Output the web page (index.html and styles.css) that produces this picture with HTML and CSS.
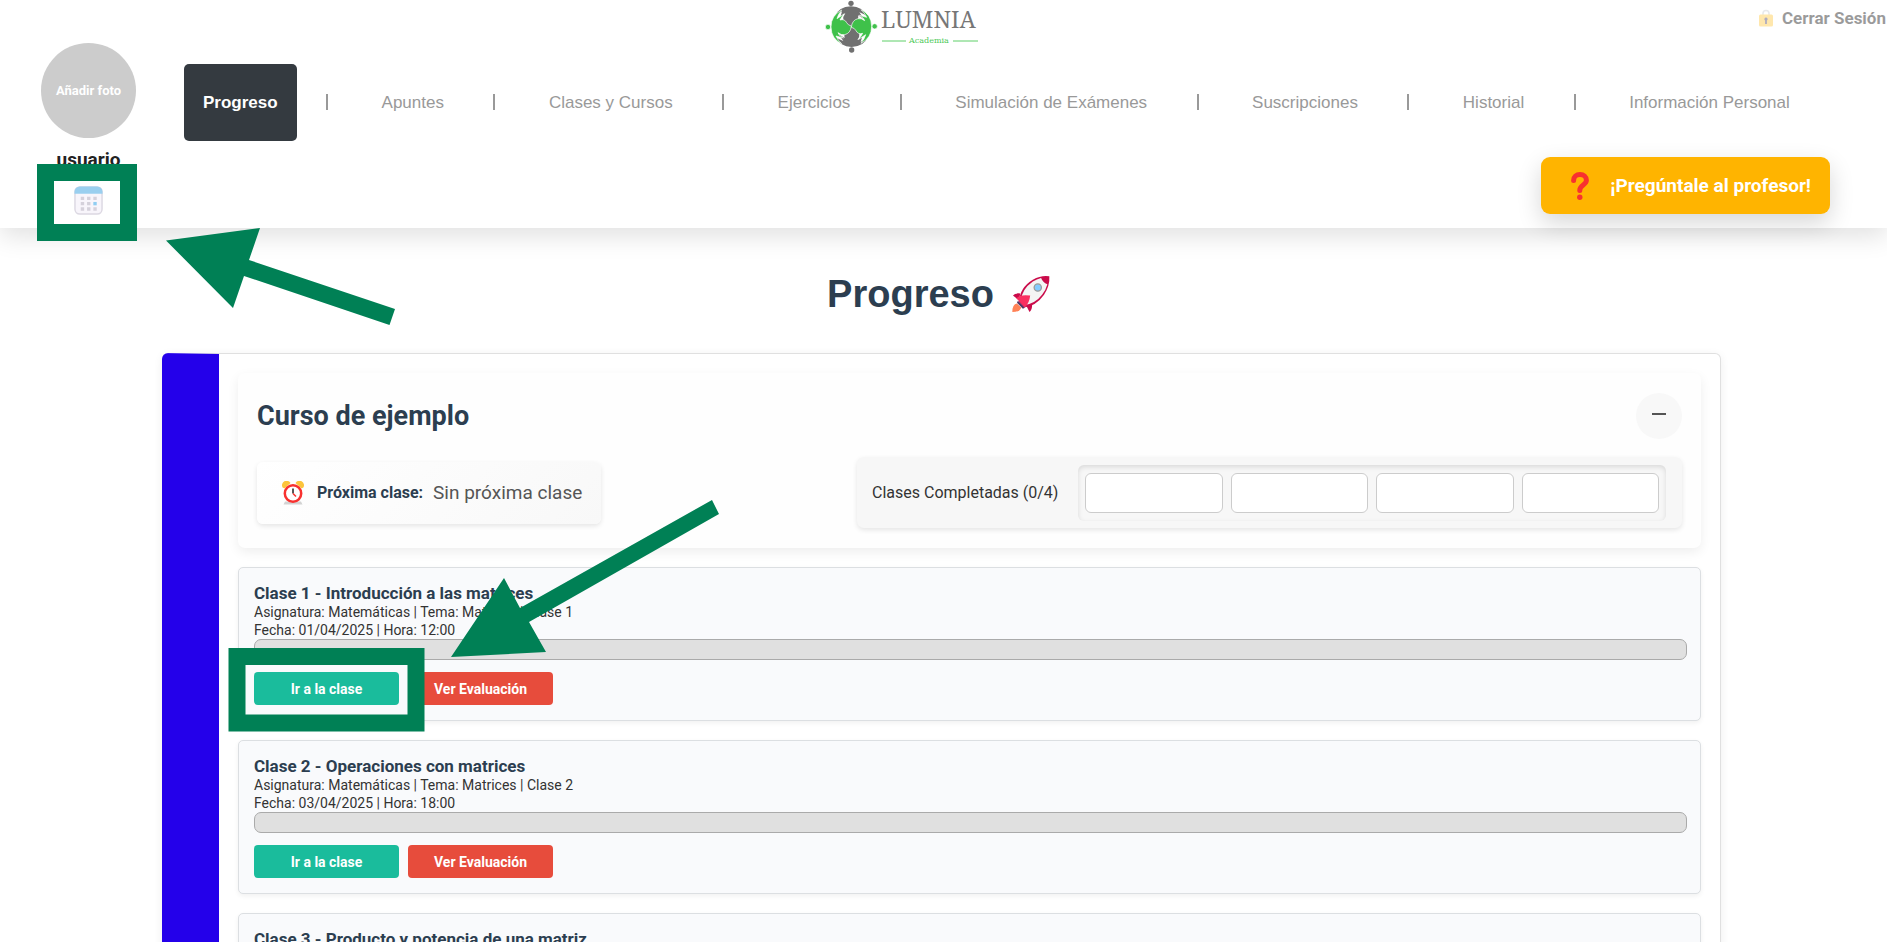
FILE: index.html
```html
<!DOCTYPE html>
<html lang="es">
<head>
<meta charset="utf-8">
<title>Lumnia Academia - Progreso</title>
<link rel="stylesheet" href="styles.css">
</head>
<body>
<header class="header">
  <div class="topbar">
    <a class="brand" href="#" aria-label="Lumnia Academia">
      <svg class="brand-logo" viewBox="0 0 237 54" width="237" height="54">
        <defs>
          <g id="figure">
            <circle cx="87" cy="10" r="8"/>
            <path d="M37 51Q50 20 87 19Q122 19 138 51Q124 40 112 37L126 58Q116 50 108 46Q112 60 100 66Q92 70 90 80Q68 78 64 60Q62 50 70 40Q62 42 54 56L60 34Q46 40 37 51Z"/>
          </g>
        </defs>
        <g transform="translate(-3 0) scale(.3333)">
          <use href="#figure" fill="#707070"/>
          <use href="#figure" fill="#707070" transform="rotate(180 88 80)"/>
          <g stroke="#fff" stroke-width="2">
            <use href="#figure" fill="#3fc14a" transform="rotate(90 88 80)"/>
            <use href="#figure" fill="#3fc14a" transform="rotate(270 88 80)"/>
          </g>
        </g>
        <text class="brand-name" x="56" y="28">LUMNIA</text>
        <path d="M57 41h24M128 41h25" stroke="#5fcf68" stroke-width="1"/>
        <text class="brand-sub" x="84" y="43">Academia</text>
      </svg>
    </a>
    <a class="logout" href="#">
      <svg viewBox="0 0 16 20" width="16" height="20" aria-hidden="true">
        <path d="M5 9V5.500a3 3 0 0 1 6 0V9" fill="none" stroke="#c9cdd2" stroke-width="1.600"/>
        <rect x="1" y="6.500" width="14" height="12" rx="1.500" fill="#ffc83d"/>
        <path d="M8 9.500a1.700 1.700 0 0 0-.9 3.100V16h1.800v-3.400A1.700 1.700 0 0 0 8 9.500z" fill="#433b6b"/>
      </svg>
      <span>Cerrar Sesión</span>
    </a>
  </div>

  <div class="profile">
    <button class="avatar" type="button">Añadir foto</button>
    <span class="username">usuario</span>
    <a class="calendar" href="#" aria-label="Calendario">
      <svg viewBox="0 0 30 30" width="29" height="29">
        <rect x="1" y="1" width="28" height="28" rx="5" fill="#f8f5fb" stroke="#dcd8e2" stroke-width="1.500"/>
        <path d="M.5 8V6A5.500 5.500 0 0 1 6 .5h18A5.500 5.500 0 0 1 29.500 6v2z" fill="#9acfef"/>
        <g fill="#d5d1db">
          <path d="M7 11h3.500v3.500H7zM13.500 11H17v3.500h-3.500zM20 11h3.500v3.500H20zM7 16.500h3.500V20H7zM13.500 16.500H17V20h-3.500zM7 22h3.500v3.500H7zM13.500 22H17v3.500h-3.500zM20 22h3.500v3.500H20z"/>
        </g>
        <path d="M20 16.500h3.500V20H20z" fill="#8fcdf2"/>
      </svg>
    </a>
  </div>

  <nav class="nav">
    <a class="nav-link active" href="#">Progreso</a><span class="sep"></span>
    <a class="nav-link" href="#">Apuntes</a><span class="sep"></span>
    <a class="nav-link" href="#">Clases y Cursos</a><span class="sep"></span>
    <a class="nav-link" href="#">Ejercicios</a><span class="sep"></span>
    <a class="nav-link" href="#">Simulación de Exámenes</a><span class="sep"></span>
    <a class="nav-link" href="#">Suscripciones</a><span class="sep"></span>
    <a class="nav-link" href="#">Historial</a><span class="sep"></span>
    <a class="nav-link" href="#">Información Personal</a>
  </nav>

  <button class="ask" type="button">
    <svg viewBox="0 0 18 28" width="18" height="28" aria-hidden="true">
      <path d="M2.600 8.500C2.600 4.800 5.300 2.600 9 2.600s6.400 2.300 6.400 5.700c0 4.700-6.600 4.600-6.600 9.700v.5" fill="none" stroke="#f8312f" stroke-width="5" stroke-linecap="round"/>
      <circle cx="8.800" cy="25.300" r="2.700" fill="#f8312f"/>
    </svg>
    <span>¡Pregúntale al profesor!</span>
  </button>
</header>

<main class="main">
  <h1 class="title">Progreso
    <svg viewBox="21 21 115 113" width="38" height="38" aria-hidden="true">
      <path d="M36 106Q22 108 22 132Q45 132 49 118z" fill="#ff8257"/>
      <path d="M46 76Q30 74 24 82L42 96zM82 110Q82 126 74 132L64 112z" fill="#ca0b4a"/>
      <path d="M42 102Q44 58 84 34Q110 20 134 24Q136 52 118 80Q94 114 58 118z" fill="#ca0b4a"/>
      <path d="M48 98Q50 64 84 40Q96 32 109 29Q114 42 128 48Q124 64 112 80Q92 106 60 111z" fill="#f4f4f4"/>
      <path d="M39 98L60 119L54 122L36 104z" fill="#533566"/>
      <path d="M34 90Q46 78 76 82Q74 104 60 118z" fill="#f92f60"/>
      <circle cx="99" cy="58" r="11" fill="#83cbff" stroke="#9b9b9b" stroke-width="4"/>
    </svg>
  </h1>

  <section class="course">
    <div class="summary">
      <div class="summary-head">
        <h2 class="course-name">Curso de ejemplo</h2>
        <button class="toggle" type="button" aria-label="Contraer"><span class="minus"></span></button>
      </div>
      <div class="summary-body">
        <div class="next">
          <svg viewBox="0 0 22 24" width="22" height="24" aria-hidden="true">
            <path d="M3 20.500h16l1.500 3h-19z" fill="#d3d3d3"/>
            <path d="M.6 6.500A4.500 4.500 0 0 1 8.500 2L2.500 7.500zM21.400 6.500A4.500 4.500 0 0 0 13.500 2l6 5.500z" fill="#fcc43c"/>
            <circle cx="11" cy="12.500" r="8.200" fill="#fff" stroke="#f8312f" stroke-width="2.500"/>
            <path d="M11 7.500v5" stroke="#212121" stroke-width="1.500"/>
            <path d="M11 12.500l3 3" stroke="#f8312f" stroke-width="1.500"/>
          </svg>
          <strong class="next-label">Próxima clase:</strong>
          <span class="next-value">Sin próxima clase</span>
        </div>
        <div class="completed">
          <span class="completed-label">Clases Completadas (0/4)</span>
          <div class="segments">
            <span class="segment"></span><span class="segment"></span><span class="segment"></span><span class="segment"></span>
          </div>
        </div>
      </div>
    </div>

    <article class="lesson">
      <h3 class="lesson-title">Clase 1 - Introducción a las matrices</h3>
      <p class="lesson-info">Asignatura: Matemáticas | Tema: Matrices | Clase 1</p>
      <p class="lesson-info">Fecha: 01/04/2025 | Hora: 12:00</p>
      <div class="bar"></div>
      <div class="actions">
        <button class="btn go" type="button">Ir a la clase</button>
        <button class="btn review" type="button">Ver Evaluación</button>
      </div>
    </article>

    <article class="lesson">
      <h3 class="lesson-title">Clase 2 - Operaciones con matrices</h3>
      <p class="lesson-info">Asignatura: Matemáticas | Tema: Matrices | Clase 2</p>
      <p class="lesson-info">Fecha: 03/04/2025 | Hora: 18:00</p>
      <div class="bar"></div>
      <div class="actions">
        <button class="btn go" type="button">Ir a la clase</button>
        <button class="btn review" type="button">Ver Evaluación</button>
      </div>
    </article>

    <article class="lesson">
      <h3 class="lesson-title">Clase 3 - Producto y potencia de una matriz</h3>
    </article>
  </section>
</main>

<svg class="marks" width="740" height="740" viewBox="0 0 740 740" aria-hidden="true">
  <g fill="none" stroke="#008055" stroke-width="17">
    <rect x="45.500" y="172.500" width="83" height="60"/>
    <rect x="237" y="656.500" width="179" height="66.500"/>
  </g>
  <g fill="#008055">
    <path d="M166 240.500L260 228L249 260L395 309L389.500 325L244 276L233 308z"/>
    <path d="M451 657L504 578L520 608L712 500L719 514L529 622L546 652z"/>
  </g>
</svg>
</body>
</html>
```
FILE: styles.css
```css
* { box-sizing: border-box; }

html { overflow: hidden; }

body {
  margin: 0;
  height: 100vh;
  overflow: hidden;
  position: relative;
  background: #fff;
  color: #333;
  font-family: Roboto, "Liberation Sans", sans-serif;
  font-size: 16px;
}

a { color: inherit; text-decoration: none; }
button { border: 0; font-family: inherit; cursor: pointer; }
h1, h2, h3, p { margin: 0; }
svg { flex: none; display: block; }

.header {
  display: grid;
  grid-template-columns: 177px 1fr;
  grid-template-rows: 54px auto auto;
  align-content: start;
  height: 228px;
  background: #fff;
  box-shadow: 0 8px 24px rgba(0, 0, 0, .12);
}

.topbar {
  grid-area: 1 / 1 / 2 / 3;
  display: grid;
  grid-template-columns: 1fr auto 1fr;
  align-items: start;
}

.brand { grid-column: 2; }
.brand-name { font: 23px "Noto Serif", "DejaVu Serif", serif; fill: #777; }
.brand-sub { font: 8px "DejaVu Serif", serif; fill: #4cc957; }

.logout {
  justify-self: end;
  display: flex;
  align-items: center;
  gap: 8px;
  padding: 8px 1px 0 0;
  font-size: 17px;
  font-weight: 700;
  line-height: 20px;
  opacity: .42;
  color: #111;
}

.profile {
  grid-area: 1 / 1 / 4 / 2;
  display: flex;
  flex-direction: column;
  align-items: center;
  padding-top: 43px;
}

.avatar {
  width: 95px;
  height: 95px;
  padding: 0;
  border-radius: 50%;
  background: #ccc;
  color: #fff;
  font-size: 13px;
  font-weight: 700;
}

.username {
  margin-top: 11px;
  color: #222;
  font-size: 19px;
  font-weight: 700;
  line-height: 21px;
}

.calendar { margin-top: 16px; }

.nav {
  grid-area: 2 / 2;
  display: flex;
  justify-content: space-between;
  align-items: center;
  margin: 9px 77px 0 7px;
  font-family: "Liberation Sans", Arial, sans-serif;
  font-size: 17px;
}

.nav-link { padding: 29px 20px 28px; line-height: 20px; color: #999; }
.nav-link.active {
  padding: 29px 19px 28px;
  border-radius: 5px;
  background: #343a40;
  color: #fff;
  font-weight: 700;
}

.sep { width: 2px; height: 16px; margin-right: 4px; background: #999; }

.ask {
  grid-area: 3 / 2;
  justify-self: end;
  display: flex;
  align-items: center;
  gap: 21px;
  height: 57px;
  margin: 16px 57px 0 0;
  padding: 0 19px 0 30px;
  border-radius: 9px;
  background: #ffb400;
  color: #fff;
  font-size: 19px;
  font-weight: 700;
  box-shadow: 0 9px 24px rgba(0, 0, 0, .16);
}

.main { padding: 44px 166px 0 162px; }

.title {
  display: flex;
  justify-content: center;
  align-items: center;
  gap: 18px;
  margin: 0 6px 37px 0;
  color: #2c3e50;
  font: 700 38px/44px "Liberation Sans", Arial, sans-serif;
}

.course {
  display: flex;
  flex-direction: column;
  gap: 19px;
  padding: 19px;
  border: 1px solid #e0e0e0;
  border-left: 57px solid #2400ea;
  border-radius: 6px;
  background: #fff;
  box-shadow: 0 2px 10px rgba(0, 0, 0, .07);
}

.summary {
  padding: 20px 19px;
  border-radius: 7px;
  background: #fefefe;
  box-shadow: 0 4px 12px rgba(0, 0, 0, .07);
}

.summary-head, .summary-body { display: flex; justify-content: space-between; align-items: center; }
.summary-body { margin-top: 18px; }

.course-name { color: #2c3e50; font-size: 27px; line-height: 32px; }

.toggle {
  display: grid;
  place-items: center;
  width: 46px;
  height: 46px;
  padding: 0 0 5px;
  border-radius: 50%;
  background: #f8f8f8;
}
.minus { width: 14px; height: 2px; background: #555; }

.next {
  display: flex;
  align-items: center;
  height: 62px;
  padding: 0 19px 0 25px;
  border-radius: 6px;
  background: linear-gradient(135deg, #fff, #f8f8f8);
  box-shadow: 0 2px 5px rgba(0, 0, 0, .1);
}
.next-label { margin: 0 10px 0 13px; color: #2c3e50; font-size: 16px; }
.next-value { color: #555; font-size: 19px; }

.completed {
  display: flex;
  align-items: center;
  gap: 20px;
  width: 825px;
  height: 71px;
  padding: 0 16px 0 15px;
  border-radius: 7px;
  background: #f7f7f7;
  box-shadow: 0 2px 5px rgba(0, 0, 0, .1);
}
.completed-label { white-space: nowrap; }

.segments {
  flex: 1;
  display: flex;
  gap: 8px;
  padding: 8px 7px;
  border-radius: 6px;
  box-shadow: inset 0 2px 5px rgba(0, 0, 0, .12);
}
.segment {
  flex: 1;
  height: 40px;
  border: 1px solid #ccc;
  border-radius: 6px;
  background: #fff;
}

.lesson {
  height: 154px;
  padding: 15px 13px 0 15px;
  border: 1px solid #dcdfe2;
  border-radius: 5px;
  background: #f9fafc;
  box-shadow: 0 2px 5px rgba(0, 0, 0, .06);
}
.lesson-title { color: #2c3e50; font-size: 17px; line-height: 20px; }
.lesson-info { font-size: 14px; line-height: 18px; }

.bar {
  height: 21px;
  border: 1px solid #aaa;
  border-radius: 7px;
  background: #e0e0e0;
}

.actions { display: flex; gap: 9px; margin-top: 12px; }
.btn {
  width: 145px;
  height: 33px;
  border-radius: 4px;
  color: #fff;
  font-size: 14px;
  font-weight: 700;
}
.go { background: #1abc9c; }
.review { background: #e74c3c; }

.marks { position: absolute; top: 0; left: 0; pointer-events: none; }
```
